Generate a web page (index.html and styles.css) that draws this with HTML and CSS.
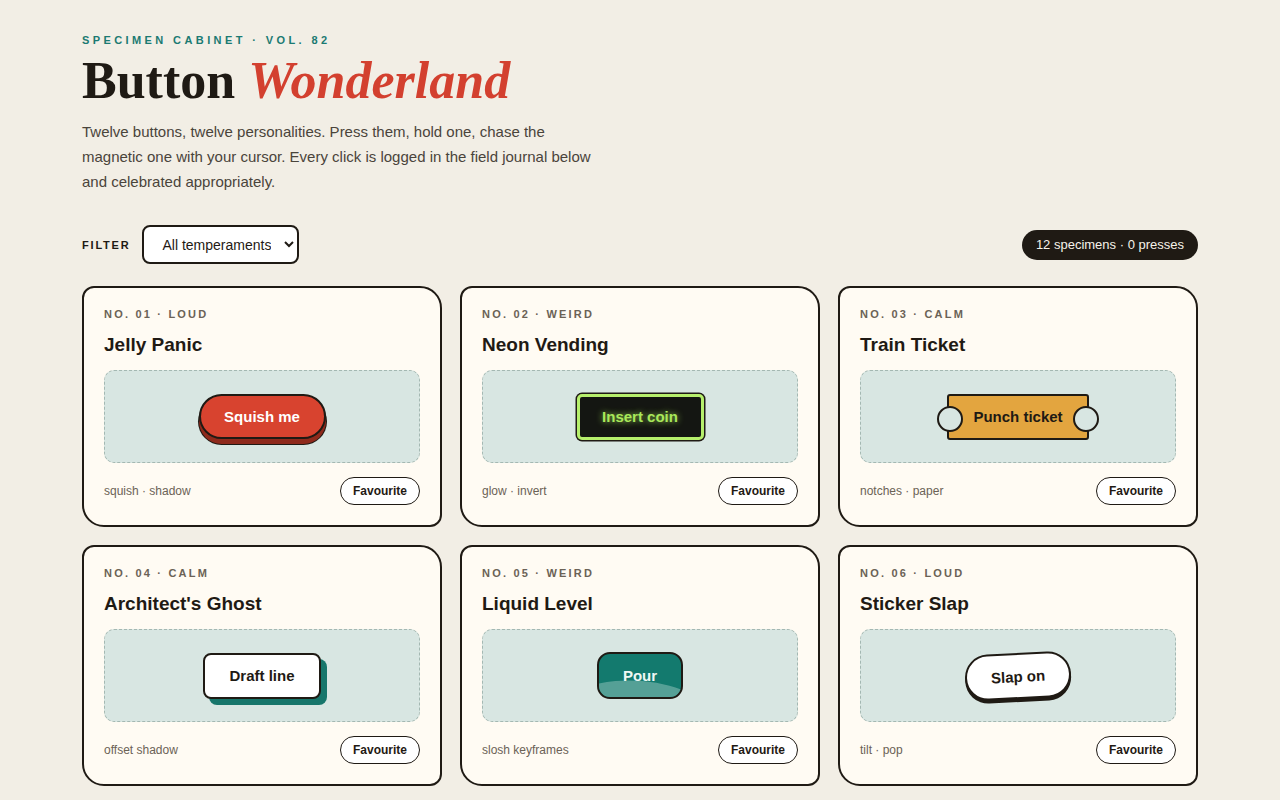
FILE: index.html
```html
<!DOCTYPE html>
<html lang="en">
<head>
  <meta charset="UTF-8">
  <meta name="viewport" content="width=device-width, initial-scale=1.0">
  <title>Button Wonderland</title>
  <link rel="stylesheet" href="styles.css">
</head>
<body>
  <main class="page">
    <header class="masthead">
      <p class="eyebrow">Specimen Cabinet · Vol. 82</p>
      <h1>Button <em>Wonderland</em></h1>
      <p class="lede">Twelve buttons, twelve personalities. Press them, hold one, chase the magnetic one with your cursor. Every click is logged in the field journal below and celebrated appropriately.</p>
    </header>

    <div class="toolbar">
      <label class="filter">
        <span class="filter-label">Filter</span>
        <select id="temperament">
          <option>All temperaments</option>
          <option>Loud</option>
          <option>Calm</option>
          <option>Weird</option>
        </select>
      </label>
      <span class="counter" id="counter">12 specimens · 0 presses</span>
    </div>

    <section class="grid">
      <article class="card">
        <p class="tag">No. 01 · Loud</p>
        <h2>Jelly Panic</h2>
        <div class="stage"><button class="specimen jelly">Squish me</button></div>
        <footer class="card-foot"><span class="notes">squish · shadow</span><button class="fav">Favourite</button></footer>
      </article>

      <article class="card">
        <p class="tag">No. 02 · Weird</p>
        <h2>Neon Vending</h2>
        <div class="stage"><button class="specimen neon">Insert coin</button></div>
        <footer class="card-foot"><span class="notes">glow · invert</span><button class="fav">Favourite</button></footer>
      </article>

      <article class="card">
        <p class="tag">No. 03 · Calm</p>
        <h2>Train Ticket</h2>
        <div class="stage"><button class="specimen ticket">Punch ticket</button></div>
        <footer class="card-foot"><span class="notes">notches · paper</span><button class="fav">Favourite</button></footer>
      </article>

      <article class="card">
        <p class="tag">No. 04 · Calm</p>
        <h2>Architect's Ghost</h2>
        <div class="stage"><button class="specimen ghost">Draft line</button></div>
        <footer class="card-foot"><span class="notes">offset shadow</span><button class="fav">Favourite</button></footer>
      </article>

      <article class="card">
        <p class="tag">No. 05 · Weird</p>
        <h2>Liquid Level</h2>
        <div class="stage"><button class="specimen liquid"><span>Pour</span></button></div>
        <footer class="card-foot"><span class="notes">slosh keyframes</span><button class="fav">Favourite</button></footer>
      </article>

      <article class="card">
        <p class="tag">No. 06 · Loud</p>
        <h2>Sticker Slap</h2>
        <div class="stage"><button class="specimen sticker">Slap on</button></div>
        <footer class="card-foot"><span class="notes">tilt · pop</span><button class="fav">Favourite</button></footer>
      </article>
    </section>
  </main>

  <script>
    let presses = 0;
    const counter = document.getElementById('counter');

    document.querySelectorAll('.specimen').forEach(btn => {
      btn.addEventListener('click', () => {
        presses++;
        counter.textContent = `12 specimens · ${presses} presses`;
      });
    });

    document.querySelectorAll('.fav').forEach(btn => {
      btn.addEventListener('click', () => btn.classList.toggle('on'));
    });
  </script>
</body>
</html>
```

FILE: styles.css
```css
* {
  box-sizing: border-box;
}
body {
  margin: 0;
  background: #f2eee5;
  color: #1f1a14;
  font-family: 'Liberation Sans', Arial, sans-serif;
}
.page {
  max-width: 1116px;
  margin: 0 auto;
  padding: 34px 0 40px;
}

/* header */
.eyebrow {
  margin: 0;
  font-size: 11px;
  font-weight: 700;
  letter-spacing: 3.4px;
  text-transform: uppercase;
  color: #1b7a72;
}
h1 {
  margin: 6px 0 10px;
  font-family: 'Liberation Serif', 'Times New Roman', serif;
  font-size: 52px;
  line-height: 1.1;
  font-weight: 700;
  color: #1f1a14;
}
h1 em {
  color: #d3402f;
}
.lede {
  margin: 0;
  max-width: 520px;
  font-size: 15px;
  line-height: 25px;
  color: #4a443b;
}

/* filter + counter */
.toolbar {
  display: flex;
  align-items: center;
  justify-content: space-between;
  margin: 31px 0 22px;
}
.filter {
  display: flex;
  align-items: center;
  gap: 12px;
}
.filter-label {
  font-size: 11px;
  font-weight: 700;
  letter-spacing: 1.8px;
  text-transform: uppercase;
  color: #1f1a14;
}
select {
  height: 39px;
  padding: 0 10px 0 14px;
  border: 2px solid #1f1a14;
  border-radius: 8px;
  background: #fff;
  color: #1f1a14;
  font-family: 'Liberation Sans', Arial, sans-serif;
  font-size: 14px;
}
.counter {
  padding: 8px 14px;
  border-radius: 16px;
  background: #1f1a14;
  color: #f6f2ea;
  font-size: 13px;
  line-height: 14px;
}

/* specimen cards */
.grid {
  display: grid;
  grid-template-columns: repeat(3, 1fr);
  gap: 18px;
}
.card {
  background: #fffbf3;
  border: 2px solid #1f1a14;
  border-radius: 12px 22px 12px 22px;
  padding: 19px 20px 20px;
}
.tag {
  margin: 0;
  font-size: 11px;
  line-height: 14px;
  font-weight: 700;
  letter-spacing: 2.2px;
  text-transform: uppercase;
  color: #6b6256;
}
.card h2 {
  margin: 13px 0 14px;
  font-size: 19px;
  line-height: 22px;
  font-weight: 700;
}
.stage {
  display: flex;
  align-items: center;
  justify-content: center;
  height: 93px;
  background: #d8e6e2;
  border: 1px dashed #a4b8b2;
  border-radius: 10px;
}
.card-foot {
  display: flex;
  align-items: center;
  justify-content: space-between;
  margin-top: 14px;
}
.notes {
  font-size: 12px;
  color: #6b6256;
}
.fav {
  height: 28px;
  padding: 0 12px;
  border: 1.5px solid #1f1a14;
  border-radius: 14px;
  background: #fff;
  color: #1f1a14;
  font-family: 'Liberation Sans', Arial, sans-serif;
  font-size: 12px;
  font-weight: 700;
  cursor: pointer;
}
.fav.on {
  background: #1f1a14;
  color: #fff;
}

/* the buttons on show */
.specimen {
  font-family: 'Liberation Sans', Arial, sans-serif;
  font-size: 15px;
  font-weight: 700;
  cursor: pointer;
  border: 2px solid #1f1a14;
}
.jelly {
  width: 127px;
  height: 45px;
  border-radius: 23px;
  background: #d8432f;
  color: #fff;
  box-shadow: 0 5px 0 #8e2a1c, 0 5px 0 1px #1f1a14;
  transition: transform 0.15s ease;
}
.jelly:active {
  transform: translateY(4px) scaleX(1.06);
  box-shadow: 0 1px 0 #8e2a1c;
}
.neon {
  width: 127px;
  height: 46px;
  border: 3px solid #b6ef6c;
  border-radius: 5px;
  background: #141612;
  color: #a9e85a;
  box-shadow: 0 0 0 1.5px #1f1a14;
  text-shadow: 0 0 6px rgba(169, 232, 90, 0.85);
}
.ticket {
  position: relative;
  width: 142px;
  height: 46px;
  border-radius: 3px;
  background: #e3a53f;
  color: #1f1a14;
}
.ticket::before,
.ticket::after {
  content: '';
  position: absolute;
  top: 50%;
  width: 22px;
  height: 22px;
  margin-top: -11px;
  border: 2px solid #1f1a14;
  border-radius: 50%;
  background: #d8e6e2;
}
.ticket::before { left: -12px; }
.ticket::after { right: -12px; }
.ghost {
  width: 118px;
  height: 46px;
  border-radius: 8px;
  background: #fff;
  color: #1f1a14;
  box-shadow: 6px 6px 0 #17766b;
}
.liquid {
  position: relative;
  overflow: hidden;
  width: 86px;
  height: 47px;
  border-radius: 13px;
  background: #137a6e;
  color: #eef8f4;
}
.liquid::before {
  content: '';
  position: absolute;
  left: -30px;
  right: -30px;
  top: 27px;
  height: 60px;
  border-radius: 50% 50% 0 0;
  background: #55a096;
  transform: rotate(5deg);
}
.liquid span {
  position: relative;
}
.sticker {
  width: 106px;
  height: 46px;
  border-radius: 23px;
  background: #fff;
  color: #1f1a14;
  box-shadow: 0 3px 0 #1f1a14;
  transform: rotate(-3deg);
}
```
